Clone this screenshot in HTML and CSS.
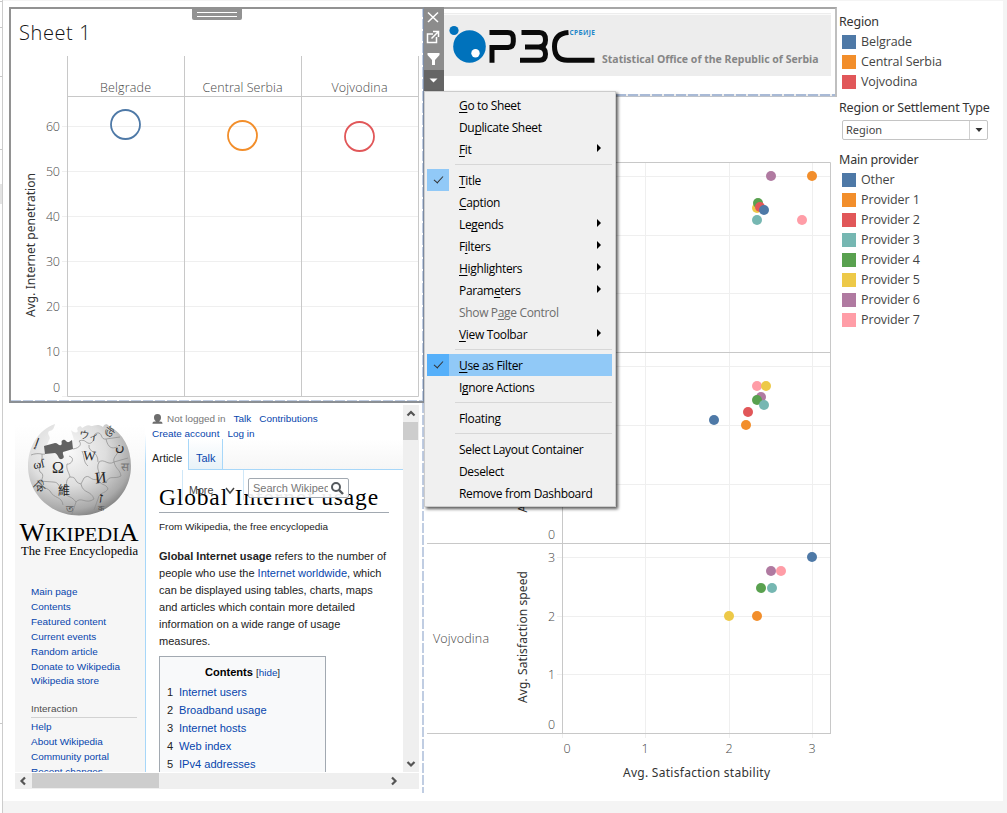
FILE: index.html
```
<!DOCTYPE html>
<html lang="en">
<head>
<meta charset="utf-8">
<title>Dashboard</title>
<link rel="stylesheet" href="styles.css">
</head>
<body>
<div class="app">
  <div class="gutter"><svg width="2" height="813"><path class="axis" d="M0 1.5H2M0 27.5H2M0 76.5H2M0 149.5H2M0 723.5H2"/><rect y="184" width="2" height="20" fill="#e3e3e3"/></svg></div>
  <main class="canvas">
    <section class="left">
      <div class="sheet">
        <h2 class="sheet-title">Sheet 1</h2>
        <svg class="bars" viewBox="11 50 411 350" width="411" height="350">
          <path class="grid" d="M62 126.5H418M62 171.5H418M62 216.5H418M62 261.5H418M62 306.5H418M62 351.5H418M62 396.5H67"/>
          <path class="axis" d="M67.500 56V396.500H418.500V56M184.500 56V396M301.500 56V396M67 96.500H418"/>
          <g class="tick" text-anchor="middle">
            <text x="125.500" y="92" textLength="51">Belgrade</text>
            <text x="242.500" y="92" textLength="80">Central Serbia</text>
            <text x="359.500" y="92" textLength="56">Vojvodina</text>
          </g>
          <g class="tick">
            <text x="46" y="131" textLength="14">60</text><text x="46" y="176" textLength="14">50</text>
            <text x="46" y="221" textLength="14">40</text><text x="46" y="266" textLength="14">30</text>
            <text x="46" y="311" textLength="14">20</text><text x="46" y="356" textLength="14">10</text>
            <text x="53" y="392">0</text>
          </g>
          <text class="axis-title" transform="translate(35 317) rotate(-90)" textLength="144">Avg. Internet penetration</text>
          <g fill="none" stroke-width="1.800">
            <circle cx="125.500" cy="124.500" r="14.500" stroke="#4e79a7"/>
            <circle cx="242.500" cy="135.500" r="14.500" stroke="#f28e2b"/>
            <circle cx="359.500" cy="136.500" r="14.500" stroke="#e15759"/>
          </g>
        </svg>
        <div class="grip"><i></i><i></i></div>
      </div>
      <div class="web">
        <div class="page">
          <aside class="side">
            <svg class="logo" viewBox="15 405 130 160" width="130" height="160">
              <defs>
                <radialGradient id="ball" cx=".38" cy=".3" r=".75"><stop offset="0" stop-color="#fafafa"/><stop offset=".5" stop-color="#dedede"/><stop offset=".85" stop-color="#a9a9a9"/><stop offset="1" stop-color="#7c7c7c"/></radialGradient>
              </defs>
              <path fill="url(#ball)" d="M55 424 C38 430 28 447 28 466 C28 494 51 515.500 79 515.500 C108 515.500 131 494 131 466 C131 448 123 433 109 426 C107 423 104 424 103 427 C98 423 94 426 91 426 C88 424 84 427 82 428 C81 424 75 428 78 431 C76 434 73 432 71 430 L74 440 L45 451 L49 440 C52 437 46 435 49 431 C53 431 54 428 55 424 Z"/>
              <path fill="#626262" d="M44 446 L55 443 C58 443 58 446 61 445 C63 444 60 441 63 440 C66 439 66 443 69 442 L72 440 L73 449 L63 452 C62 455 66 457 62 459 C58 460 59 455 55 453 L45 454 Z"/>
              <g fill="none" stroke="#8b8b8b" stroke-width=".7">
                <path d="M31 455C39 452 42 455 45 454M73 449C80 448 82 444 79 441C86 438 86 445 91 443C97 439 91 435 97 433C103 432 100 440 106 439L120 437M106 439C108 448 112 449 117 447C121 454 112 456 114 462L128 458M114 462C108 466 104 458 99 462C95 470 102 472 98 479C90 482 90 473 84 478L81 484C73 482 78 477 70 477C64 480 69 486 63 490C58 488 60 482 53 482L39 481M69 456C76 458 71 465 67 464C66 470 69 472 70 477M42 454C43 464 37 465 40 472C47 475 38 482 42 487M98 479C100 486 106 483 108 489C105 494 99 492 98 499L94 510M114 462C116 470 120 469 121 476C114 480 109 474 106 483M81 484C83 494 91 490 94 499C86 505 81 496 76 502L72 514M63 490C65 498 70 494 76 502M34 485C42 489 45 486 50 491C54 499 62 496 63 505M89 445C88 453 98 450 98 462M82 451C85 457 83 462 88 466"/>
              </g>
              <g class="glyph" fill="#252525">
                <text x="52" y="473" font-size="16">Ω</text>
                <text x="83" y="460" font-size="13.500" transform="rotate(4 88 455)">W</text>
                <text x="95" y="483" font-size="16" transform="rotate(-6 101 478)">И</text>
                <text class="cjk" x="58" y="495" font-size="12">維</text>
                <text x="99" y="503" font-size="15" transform="rotate(8 103 498)">ז</text>
                <text x="79" y="438" font-size="10" transform="rotate(9 84 435)">ウィ</text>
                <text x="33" y="469" font-size="12" transform="rotate(-12 35 464)">ωſ</text>
                <text x="35" y="447" font-size="12" transform="rotate(20 38 444)">إ</text>
                <text x="104" y="436" font-size="11" transform="rotate(35 108 433)">ঊ</text>
                <text x="115" y="451" font-size="13">ن</text>
                <text x="33" y="489" font-size="12" transform="rotate(45 36 486)">কি</text>
                <text x="121" y="471" font-size="12" fill="#777">स</text>
                <text x="66" y="512" font-size="10" fill="#444">ত</text>
                <text x="98" y="511" font-size="8" fill="#555">क</text>
              </g>
              <g class="wordmark">
                <text x="19.500" y="541" textLength="119" lengthAdjust="spacingAndGlyphs"><tspan font-size="25">W</tspan><tspan font-size="19">IKIPEDI</tspan><tspan font-size="25">A</tspan></text>
                <text x="21" y="555" font-size="12.500" textLength="117" lengthAdjust="spacingAndGlyphs">The Free Encyclopedia</text>
              </g>
            </svg>
            <ul class="nav nav-main"><li>Main page</li><li>Contents</li><li>Featured content</li><li>Current events</li><li>Random article</li><li>Donate to Wikipedia</li><li>Wikipedia store</li></ul>
            <h3>Interaction</h3>
            <ul class="nav"><li>Help</li><li>About Wikipedia</li><li>Community portal</li><li>Recent changes</li></ul>
          </aside>
          <article class="body">
            <header class="head">
              <div class="user"><svg width="11" height="11" viewBox="0 0 11 11"><path fill="#6d6d6d" d="M5.500 0C8 0 9 1.500 9 3.500C9 5.500 8 7 7 7.300C9 7.800 10.500 7.500 10.500 9.800H.5C.5 7.500 2 7.800 4 7.300C3 7 2 5.500 2 3.500C2 1.500 3 0 5.500 0Z"/></svg><span class="muted">Not logged in</span><a>Talk</a><a>Contributions</a></div>
              <div class="user second"><a>Create account</a><a>Log in</a></div>
              <div class="tabs"><b>Article</b><a>Talk</a></div>
            </header>
            <div class="content">
              <h1>Global Internet usage</h1>
              <p class="from">From Wikipedia, the free encyclopedia</p>
              <p class="lead"><b>Global Internet usage</b> refers to the number of<br>people who use the <a>Internet worldwide</a>, which<br>can be displayed using tables, charts, maps<br>and articles which contain more detailed<br>information on a wide range of usage<br>measures.</p>
              <div class="toc">
                <div class="toc-head"><b>Contents</b> <span>[<a>hide</a>]</span></div>
                <div><i>1</i><a>Internet users</a></div><div><i>2</i><a>Broadband usage</a></div><div><i>3</i><a>Internet hosts</a></div><div><i>4</i><a>Web index</a></div><div><i>5</i><a>IPv4 addresses</a></div>
              </div>
            </div>
            <div class="more"><span>More</span><svg width="12" height="8"><path d="M2 1L6 6L10 1" fill="none" stroke="#444" stroke-width="1.500"/></svg></div>
            <div class="search"><span>Search Wikipedia</span><svg width="14" height="14"><circle cx="6" cy="6" r="4" fill="none" stroke="#54595d" stroke-width="2"/><path d="M9 9L13 13" stroke="#54595d" stroke-width="2.400"/></svg></div>
          </article>
        </div>
        <div class="vbar"><svg width="16" height="17"><path class="arrow" d="M4.500 10.500L8 7L11.500 10.500"/></svg><i></i><svg width="16" height="17"><path class="arrow" d="M4.500 7L8 10.500L11.500 7"/></svg></div>
        <div class="hbar"><svg width="17" height="16"><path class="arrow" d="M10 4.500L6.500 8L10 11.500"/></svg><i></i><svg width="17" height="16"><path class="arrow" d="M6 4.500L9.500 8L6 11.500"/></svg></div>
      </div>
    </section>
    <section class="middle">
      <div class="banner">
        <svg viewBox="443 13 388 63" width="388" height="63">
          <rect x="443" y="13" width="388" height="63" fill="#ededed"/><path d="M443 14.500H831" stroke="#fafafa"/>
          <circle cx="469.500" cy="46.500" r="16.300" fill="#0072bc"/><circle cx="475.500" cy="53.300" r="4.200" fill="#fff"/><circle cx="454" cy="30.500" r="4.600" fill="#0072bc"/>
          <g fill="none" stroke="#0a0a0a" stroke-width="5">
            <path d="M489.500 32.500H507.500Q513.300 32.500 513.300 38.500V41.500Q513.300 47.500 507.500 47.500H492V62.700"/>
            <path d="M521.500 32.500H539.500Q545.500 32.500 545.500 40Q545.500 46.500 539 47H525M539 47Q545.500 47.500 545.500 54Q545.500 60.300 539.500 60.300H520"/>
            <path d="M568.500 32.500Q554.500 33.500 554.500 46.500Q554.500 60.300 567.500 60.300H594.500"/>
          </g>
          <text class="tag" x="569.500" y="34.500" textLength="25.500">СРБИЈЕ</text>
          <text class="slogan" x="602" y="63" textLength="216.500" lengthAdjust="spacingAndGlyphs">Statistical Office of the Republic of Serbia</text>
        </svg>
      </div>
      <svg class="scatter" viewBox="424 97 413 704" width="413" height="704">
        <path class="grid" d="M557 176.500H830M557 235.500H830M557 293.500H830M557 366.500H830M557 425.500H830M557 484.500H830M557 557.500H830M557 616.500H830M557 674.500H830M645.500 162V738M729.500 162V738M812.500 162V738M562.500 734V738"/>
        <path class="axis" d="M427 162.500H830.500V733.500M562.500 162V734M427 352.500H830M427 543.500H830M427 733.500H831"/>
        <g class="tick">
          <text x="433" y="643" textLength="56">Vojvodina</text>
          <text x="548" y="539">0</text><text x="548" y="562">3</text><text x="548" y="621">2</text><text x="548" y="679">1</text><text x="548" y="729">0</text>
          <text x="563.500" y="753">0</text><text x="641.500" y="753">1</text><text x="725.500" y="753">2</text><text x="808.500" y="753">3</text>
        </g>
        <text class="axis-title" transform="translate(527 703) rotate(-90)" textLength="132">Avg. Satisfaction speed</text>
        <text class="axis-title" transform="translate(527 512.500) rotate(-90)" textLength="132">Avg. Satisfaction speed</text>
        <text class="axis-title" x="623" y="777" textLength="147">Avg. Satisfaction stability</text>
        <g>
          <circle class="p6" cx="771" cy="176" r="5"/><circle class="p1" cx="812" cy="176" r="5"/>
          <circle class="p5" cx="757" cy="208" r="5"/><circle class="p4" cx="758" cy="203" r="5"/><circle class="p2" cx="760" cy="207" r="5"/><circle class="p0" cx="764" cy="210" r="5"/>
          <circle class="p3" cx="757" cy="220" r="5"/><circle class="p7" cx="802" cy="220" r="5"/>
          <circle class="p7" cx="757" cy="386" r="5"/><circle class="p5" cx="766" cy="386" r="5"/><circle class="p6" cx="761" cy="397" r="5"/><circle class="p4" cx="757" cy="400" r="5"/><circle class="p3" cx="764" cy="405" r="5"/>
          <circle class="p2" cx="748" cy="412" r="5"/><circle class="p0" cx="714" cy="420" r="5"/><circle class="p1" cx="746" cy="425" r="5"/>
          <circle class="p0" cx="812" cy="557" r="5"/><circle class="p6" cx="771" cy="571" r="5"/><circle class="p7" cx="781" cy="571" r="5"/>
          <circle class="p4" cx="761" cy="588" r="5"/><circle class="p3" cx="772" cy="588" r="5"/><circle class="p5" cx="729" cy="616" r="5"/><circle class="p1" cx="757" cy="616" r="5"/>
        </g>
      </svg>
    </section>
    <aside class="legend">
      <h4>Region</h4>
      <ul class="keys"><li class="p0">Belgrade</li><li class="p1">Central Serbia</li><li class="p2">Vojvodina</li></ul>
      <h4 class="h-select">Region or Settlement Type</h4>
      <div class="select"><span>Region</span><svg width="18" height="18"><path d="M5.500 7H12.500L9 11Z" fill="#333"/></svg></div>
      <h4 class="h-main">Main provider</h4>
      <ul class="keys"><li class="p0">Other</li><li class="p1">Provider 1</li><li class="p2">Provider 2</li><li class="p3">Provider 3</li><li class="p4">Provider 4</li><li class="p5">Provider 5</li><li class="p6">Provider 6</li><li class="p7">Provider 7</li></ul>
    </aside>
  </main>
  <div class="tools">
    <svg width="20" height="84" fill="none" stroke="#fff" stroke-width="1.500"><rect y="63" width="20" height="21" fill="#656565" stroke="none"/><path d="M4 5.500L14 15M14 5.500L4 15"/><path d="M9 27H3.500V35.500H12.500V30M9 24.500H14.500V30M14 25L7.500 31.500"/><path d="M3.500 46H15.500V48L11 53V58H8V53L3.500 48Z" fill="#fff" stroke="none"/><path d="M5.500 71.500H13.500L9.500 75.500Z" fill="#fff" stroke="none"/></svg>
  </div>
  <nav class="menu">
    <div class="mi"><u>G</u>o to Sheet</div>
    <div class="mi">Du<u>p</u>licate Sheet</div>
    <div class="mi sub"><u>F</u>it</div>
    <hr>
    <div class="mi checked"><u>T</u>itle</div>
    <div class="mi"><u>C</u>aption</div>
    <div class="mi sub">Le<u>g</u>ends</div>
    <div class="mi sub">F<u>i</u>lters</div>
    <div class="mi sub"><u>H</u>ighlighters</div>
    <div class="mi sub">Param<u>e</u>ters</div>
    <div class="mi off">Show P<u>a</u>ge Control</div>
    <div class="mi sub"><u>V</u>iew Toolbar</div>
    <hr>
    <div class="mi checked active"><u>U</u>se as Filter</div>
    <div class="mi">I<u>g</u>nore Actions</div>
    <hr>
    <div class="mi">Floating</div>
    <hr>
    <div class="mi">Select Layout Container</div>
    <div class="mi">Deselect</div>
    <div class="mi">Remove from Dashboard</div>
  </nav>
</div>
</body>
</html>
```
FILE: styles.css
```
* { box-sizing: border-box; }
body { margin: 0; background: #f4f4f4; font-family: "Noto Sans", "Open Sans", sans-serif; }
h1, h2, h3, h4, p, ul { margin: 0; padding: 0; font-weight: normal; }
ul { list-style: none; }
svg { display: block; flex: none; }
i { font-style: normal; }
.app { position: relative; width: 1007px; height: 813px; overflow: hidden; display: flex; }
.gutter { width: 3px; border-right: 1px solid #ccc; background: #fff; }
.canvas { width: 1000px; height: 800px; margin-top: 1px; background: #fff; display: grid; grid-template-columns: 421px 413px 166px; isolation: isolate; }

.grid { stroke: #efefef; fill: none; }
.axis { stroke: #c8c8c8; fill: none; }
.tick { font: 300 12.500px "Open Sans", sans-serif; fill: #484848; }
.axis-title { font: 12px "Noto Sans", sans-serif; fill: #333; }

.left { padding: 6px 0 0 6px; position: relative; }
.left::after { content: ""; position: absolute; left: 419px; top: 6px; width: 2px; height: 786px; background: repeating-linear-gradient(#c0cde2 0 10px, #fff 10px 12px); z-index: -1; }
.sheet { position: relative; width: 415px; height: 396px; border: 2px solid #929292; border-right: 1px solid #7f8ea6; border-bottom-color: #8b8f94; padding-top: 7px; }
.sheet::after { content: ""; position: absolute; left: 0; right: 0; bottom: 0; height: 1px; background: repeating-linear-gradient(90deg, #c0cde2 0 10px, #fff 10px 12px); }
.sheet-title { height: 34px; padding-left: 8px; font: 300 20px/33px "Open Sans", sans-serif; color: #111; letter-spacing: .6px; }
.grip { position: absolute; left: 181px; top: -1px; width: 50px; height: 12px; background: #929292; border-radius: 0 0 2px 2px; padding: 4px 5px; display: flex; flex-direction: column; gap: 3px; }
.grip i { height: 1px; background: #fff; }

.web { width: 404px; height: 384px; margin: 2px 0 0 6px; display: grid; grid-template: 367px 17px / 388px 16px; font-family: "Liberation Sans", Arial, sans-serif; background: #efefef; }
.page { display: flex; overflow: hidden; background: #fff; }
.page a { color: #0645ad; }
.side { width: 131px; background: linear-gradient(#fff 20px, #f6f6f6 70px); border-right: 1px solid; border-image: linear-gradient(#fff 30px, #a7d7f9 60px) 1; border-width: 0 1px 0 0; }
.glyph { font-family: "Liberation Serif", "DejaVu Serif", serif; }
.cjk { font-family: "Noto Sans CJK TC", sans-serif; }
.wordmark { font-family: "Liberation Serif", serif; fill: #000; }
.nav { padding-left: 16px; font-size: 9.950px; line-height: 15px; color: #0645ad; }
.nav-main { margin-top: 19px; }
.side h3 { margin: 14px 8px 1px 16px; height: 16px; font-size: 9.950px; line-height: 13px; color: #4d4d4d; border-bottom: 1px solid #d2d2d2; }
.nav-main li:last-child { margin-top: -1px; }
.body { position: relative; width: 257px; }
.head { height: 65px; font-size: 9.950px; }
.user { display: flex; gap: 8px; padding: 8px 0 0 7px; line-height: 12px; height: 20px; white-space: nowrap; }
.user svg { margin: 1px -4px 0 -1px; }
.second { padding: 3px 0 0 6px; height: 14px; }
.muted { color: #767676; }
.tabs { display: flex; height: 31px; font-size: 10.900px; line-height: 38px; border-bottom: 1px solid #a7d7f9; background: linear-gradient(#fff, #f6f6f6); }
.tabs b { font-weight: normal; width: 43px; height: 31px; padding-left: 6px; background: #fff; color: #222; border-right: 1px solid #a7d7f9; }
.tabs a { width: 34px; padding-left: 7px; border-right: 1px solid #a7d7f9; background: linear-gradient(#fff, #e8f2f8); }
.content { width: 256px; padding: 14px 13px 0; }
h1 { height: 29px; font: 23.500px/27px "Liberation Serif", serif; letter-spacing: .84px; color: #000; white-space: nowrap; border-bottom: 1px solid #a2a9b1; }
.from { margin-top: 7px; font-size: 9.950px; line-height: 14px; color: #222; }
.lead { margin-top: 14px; font-size: 11.020px; line-height: 17px; color: #222; white-space: nowrap; }
.toc { margin-top: 6px; width: 167px; height: 140px; border: 1px solid #a2a9b1; background: #f8f9fa; padding: 6px 7px; font-size: 11.100px; line-height: 18px; color: #222; }
.toc-head { height: 20px; text-align: center; }
.toc-head span { font-size: 9.800px; }
.toc-head b { color: #000; }
.toc i { display: inline-block; width: 12px; }
.more { position: absolute; left: 36px; top: 65px; width: 62px; height: 30px; display: flex; gap: 11px; padding: 13px 0 0 6px; border: 1px solid #cfe7f8; border-width: 0 1px; font-size: 10.700px; line-height: 14px; color: #444; }
.more svg { margin-top: 4px; }
.search { position: absolute; left: 102px; top: 73px; width: 101px; height: 20px; border: 1px solid #a2a9b1; border-radius: 2px; background: rgba(255,255,255,.92); display: flex; justify-content: space-between; align-items: center; padding: 0 4px; font-size: 11px; color: #777; }
.search span { width: 75px; overflow: hidden; white-space: nowrap; }
.arrow { fill: none; stroke: #555; stroke-width: 2.200; }
.vbar { background: #efefef; display: flex; flex-direction: column; }
.vbar i { height: 18px; background: #cdcdcd; margin: 0 1px 0 0; }
.vbar svg:last-child { margin-top: auto; }
.hbar { grid-column: 1 / 3; border-top: 1px solid #fff; display: flex; padding-right: 16px; background: #efefef; }
.hbar i { width: 127px; height: 15px; background: #cdcdcd; }
.hbar svg:last-child { margin-left: auto; }

.banner { width: 413px; height: 90px; margin-top: 6px; border: 2px solid #bfbfbf; border-top-color: #a6a6a6; border-bottom: 0; border-left: 0; padding: 4px 0 0 19px; position: relative; }
.banner::after { content: ""; position: absolute; left: 0; right: 0; bottom: 0; height: 2px; border-bottom: 1px solid #bfc3ca; background: repeating-linear-gradient(90deg, #a9bad6 0 10px, #eee 10px 12px); }
.tag { font: bold 6.500px "Open Sans", sans-serif; fill: #1d86c8; }
.slogan { font: bold 10.700px "Noto Sans", sans-serif; fill: #868686; }

.p0 { --c: #4e79a7; } .p1 { --c: #f28e2b; } .p2 { --c: #e15759; } .p3 { --c: #76b7b2; }
.p4 { --c: #59a14f; } .p5 { --c: #edc948; } .p6 { --c: #b07aa1; } .p7 { --c: #ff9da7; }
.scatter circle { fill: var(--c); }
.legend { padding: 12px 0 0 2px; font-size: 12.500px; line-height: 20px; white-space: nowrap; }
.legend h4 { height: 18px; font-size: 12.500px; line-height: 18px; letter-spacing: -.2px; color: #333; }
.keys { padding: 1px 3px 0; color: #444; font-family: "Open Sans", sans-serif; }
.keys li { height: 20px; display: flex; gap: 5px; align-items: center; letter-spacing: -.1px; }
.keys li::before { content: ""; width: 14px; height: 14px; background: var(--c); }
.legend .h-select { margin-top: 7px; height: 21px; }
.select { width: 146px; height: 20px; margin-left: 3px; border: 1px solid #c4c4c4; border-radius: 2px; display: flex; justify-content: space-between; padding-left: 3px; font-size: 11px; line-height: 18px; color: #444; }
.select svg { border-left: 1px solid #d0d0d0; }
.legend .h-main { margin-top: 11px; }

.tools { position: absolute; left: 424px; top: 7px; width: 20px; height: 84px; background: #8c8c8c; }
.menu { position: absolute; left: 424px; top: 91px; width: 192px; height: 416px; padding: 2px 3px 2px 2px; border: 1px solid #ccc; background: #f0f0f0; box-shadow: 2px 2px 3px rgba(0,0,0,.65); font: 12px/24px "Open Sans", sans-serif; letter-spacing: -.34px; color: #000; }
.mi { position: relative; height: 22px; padding-left: 32px; white-space: nowrap; }
.mi u { text-underline-offset: 2px; text-decoration-thickness: 1px; text-decoration-skip-ink: none; }
.off { color: #6d6d6d; }
.sub::after { content: ""; position: absolute; right: 11px; top: 6px; border: 4px solid transparent; border-left-color: #000; border-right: 0; }
.active { background: #91c9f7; }
.checked::before { content: ""; position: absolute; left: 0; top: 0; width: 22px; height: 22px; background: #91c9f7; }
.active::before { background: #56b0fa; }
.checked::after { content: ""; position: absolute; left: 9px; top: 5px; width: 4px; height: 8px; border: solid #333; border-width: 0 1.500px 1.500px 0; transform: rotate(42deg); }
.menu hr { height: 1px; margin: 4px 0 4px 28px; border: 0; background: #d7d7d7; }
```
